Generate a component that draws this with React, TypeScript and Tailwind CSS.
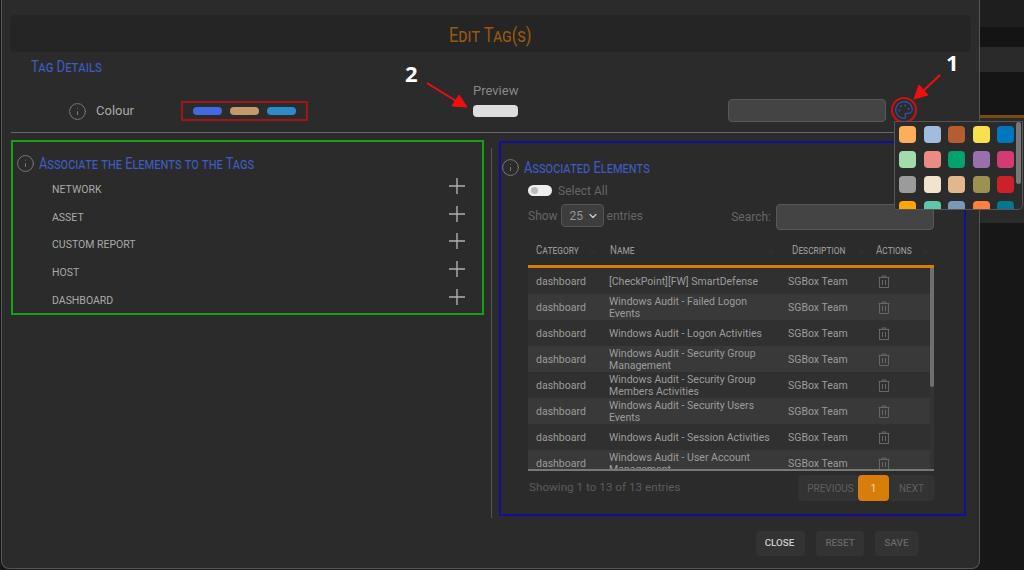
import React from 'react';
import { ChevronDown, Info, Palette } from 'lucide-react';

const elements = ['NETWORK', 'ASSET', 'CUSTOM REPORT', 'HOST', 'DASHBOARD'];

const rows = [
  '[CheckPoint][FW] SmartDefense',
  'Windows Audit - Failed Logon Events',
  'Windows Audit - Logon Activities',
  'Windows Audit - Security Group Management',
  'Windows Audit - Security Group Members Activities',
  'Windows Audit - Security Users Events',
  'Windows Audit - Session Activities',
  'Windows Audit - User Account Management',
];

const swatches = [
  'bg-[#fdae5b]', 'bg-[#a0bddd]', 'bg-[#b65d2f]', 'bg-[#f8e04e]', 'bg-[#0076bf]',
  'bg-[#a2dbac]', 'bg-[#ec8b85]', 'bg-[#00a36c]', 'bg-[#9970ad]', 'bg-[#d43b75]',
  'bg-[#9b9b9b]', 'bg-[#f0e4d0]', 'bg-[#e2b78c]', 'bg-[#9c9150]', 'bg-[#ce2029]',
  'bg-[#ffa600]', 'bg-[#5cc7a9]', 'bg-[#7d97b8]', 'bg-[#ff7f3f]', 'bg-[#00798c]',
];

const columns = [
  { label: 'Category', width: 'w-[73px] pl-2' },
  { label: 'Name', width: 'w-[179px] pl-[9px]' },
  { label: 'Description', width: 'w-[88px] pl-3' },
  { label: 'Actions', width: 'w-[66px] pl-2' },
];

const Plus = () => (
  <svg viewBox="0 0 16 16" className="w-4 h-4 mb-[8px] text-[#b0b0b0]" fill="none" stroke="currentColor" strokeWidth="1.4">
    <path d="M8 0v16M0 8h16" />
  </svg>
);

const Trash = () => (
  <svg viewBox="0 0 12 13" className="ml-[10px] w-3 h-[13px] text-[#666]" fill="none" stroke="currentColor" strokeWidth="1">
    <path d="M.5 2.5h11M4 2.5V1h4v1.5M1.5 2.5v10h9v-10M4.5 5v5M7.5 5v5" />
  </svg>
);

// the app's heading face is a narrow small-caps, Roboto squeezed to the same width
const Heading = ({ children }: { children: React.ReactNode }) => (
  <span className="inline-block origin-left scale-x-[0.8] whitespace-nowrap text-[16px] leading-4 text-[#3f5cc4] [font-variant:small-caps]">{children}</span>
);

export default function App() {
  return (
    <div className="relative w-[1024px] h-[570px] overflow-hidden flex bg-[#171717] font-['Roboto',sans-serif]">
      <div className="ml-[1px] w-[979px] h-[569px] shrink-0 border-x border-b border-[#565656] rounded-b-[8px] bg-[#2b2b2b] px-2 pt-[15px]">
        <div className="h-[37px] pt-[3px] rounded-[5px] bg-[#252525] flex items-center justify-center">
          <span className="inline-block scale-x-[0.82] text-[20px] text-[#99590f] [font-variant:small-caps]">Edit Tag(s)</span>
        </div>

        <div className="mt-[7px] ml-[21px] h-4 leading-4 text-[16px] origin-left scale-x-[0.82] text-[#3f5cc4] [font-variant:small-caps]">Tag Details</div>

        <div className="mt-[7px] h-[41px] flex items-end">
          <div className="h-6 flex items-center ml-[58px]">
            <Info className="w-[19px] h-[19px] text-[#777]" strokeWidth={1.25} />
            <span className="ml-[9px] w-[85px] text-[13px] text-[#aaa]">Colour</span>
          </div>
          <div className="mb-[2px] w-[127px] h-5 border-2 border-[#a01515] flex items-center gap-2 pl-[10px]">
            <span className="w-[29px] h-2 rounded-full bg-[#4169e1]" />
            <span className="w-[29px] h-2 rounded-full bg-[#c49a6c]" />
            <span className="w-[29px] h-2 rounded-full bg-[#2e8bc9]" />
          </div>
          <div className="ml-[165px] w-[45px] mb-[6px] flex flex-col">
            <span className="text-[13px] leading-[17px] text-[#888] whitespace-nowrap">Preview</span>
            <span className="mt-[6px] h-3 rounded-[4px] bg-[#dedede]" />
          </div>
          <div className="ml-[210px] w-[158px] h-[23px] mb-[1px] rounded-[4px] border border-[#585858] bg-[#444]" />
          <div className="ml-[5px] w-[26px] h-[26px] rounded-full border-2 border-[#d01010] flex items-center justify-center">
            <Palette className="w-5 h-5 text-[#3355bb]" strokeWidth={1.4} />
          </div>
        </div>

        <div className="mt-[9px] ml-px h-px bg-[#666]" />

        <div className="flex mt-[7px]">
          <div className="ml-px w-[473px] h-[175px] border-2 border-[#17a017] pl-[3px] pr-[17px] pt-[12px]">
            <div className="flex items-center gap-1">
              <Info className="w-[19px] h-[19px] text-[#777]" strokeWidth={1.25} />
              <Heading>Associate the Elements to the Tags</Heading>
            </div>
            <div className="mt-[3px]">
              {elements.map((name) => (
                <div key={name} className="h-[27.7px] flex items-center justify-between pl-[36px]">
                  <span className="text-[10.5px] text-[#aaa]">{name}</span>
                  <Plus />
                </div>
              ))}
            </div>
          </div>

          <div className="ml-[7px] mt-2 w-px h-[370px] bg-[#555]" />

          <div className="ml-[7px] mt-px w-[467px] h-[375px] border-2 border-[#10109a] pt-[15px]">
            <div className="flex items-center gap-1">
              <Info className="w-[19px] h-[19px] text-[#777]" strokeWidth={1.25} />
              <Heading>Associated Elements</Heading>
            </div>

            <div className="pl-[27px] pr-[30px]">
              <div className="mt-[7px] h-3 flex items-center">
                <span className="w-6 h-[11px] rounded-full bg-[#eee] flex items-center pl-[3px]">
                  <span className="w-[7px] h-[7px] rounded-full bg-[#bbb]" />
                </span>
                <span className="ml-[6px] pt-[2px] text-xs text-[#666]">Select All</span>
              </div>

              <div className="mt-2 h-[26px] flex items-start">
                <div className="h-[23px] flex items-center text-xs text-[#666]">
                  <span>Show</span>
                  <span className="ml-[3px] w-[43px] h-[23px] rounded-[4px] border border-[#555] bg-[#3d3d3d] flex items-center pl-[8px] gap-[4px] text-[#999]">
                    25
                    <ChevronDown className="w-3 h-3 text-[#ccc]" strokeWidth={2.5} />
                  </span>
                  <span className="ml-[3px]">entries</span>
                </div>
                <div className="ml-auto h-[26px] flex items-center text-xs text-[#666]">
                  <span>Search:</span>
                  <span className="ml-[5px] w-[158px] h-[26px] rounded-[4px] border border-[#585858] bg-[#444]" />
                </div>
              </div>

              <div className="mt-2 h-[30px] flex border-b-[3px] border-[#d97d0a]">
                {columns.map((col) => (
                  <div key={col.label} className={`${col.width} pr-[6px] pb-[3px] flex items-center justify-between text-[#999]`}>
                    <span className="inline-block origin-left scale-x-[0.81] text-[12px] [font-variant:small-caps]">{col.label}</span>
                    <span className="text-[6px] text-[#444]">↑↓</span>
                  </div>
                ))}
              </div>

              <div className="flex h-[201px]">
                <div className="w-[402px] overflow-hidden">
                  {rows.map((name, i) => (
                    <div key={name} className={`h-[26px] pt-px flex items-center text-[10.5px] leading-3 text-[#9c9c9c] ${i % 2 ? 'bg-[#393939]' : 'bg-[#303030]'}`}>
                      <span className="w-[73px] pl-2">dashboard</span>
                      <span className="w-[179px] pl-2 pr-[9px]">{name}</span>
                      <span className="w-[88px] pl-2">SGBox Team</span>
                      <Trash />
                    </div>
                  ))}
                </div>
                <div className="w-1 bg-[#333]">
                  <div className="h-[119px] rounded-b-full bg-[#6f6f6f]" />
                </div>
              </div>
              <div className="h-[2px] bg-[#777]" />

              <div className="mt-1 h-[26px] flex items-center justify-between text-[11.7px] text-[#5c5c5c]">
                <span className="pl-px">Showing 1 to 13 of 13 entries</span>
                <div className="flex h-[26px] items-stretch text-[10px] text-[#5f5f5f]">
                  <span className="w-[60px] pl-[5px] rounded-l-[4px] bg-[#333] flex items-center justify-center">PREVIOUS</span>
                  <span className="w-[31px] rounded-[4px] bg-[#d97d0a] text-[#e8dcc8] flex items-center justify-center">1</span>
                  <span className="w-[45px] rounded-r-[4px] bg-[#333] flex items-center justify-center">NEXT</span>
                </div>
              </div>
            </div>
          </div>
        </div>

        <div className="mt-[13px] mr-[53px] flex justify-end gap-[11px] text-[9.8px] font-medium">
          <button className="w-[49px] h-[25px] pr-[2px] rounded-[4px] bg-[#333] text-[#ccc]">CLOSE</button>
          <button className="w-[48px] h-[25px] rounded-[4px] bg-[#333] text-[#666]">RESET</button>
          <button className="w-[43px] h-[25px] rounded-[4px] bg-[#333] text-[#666]">SAVE</button>
        </div>
      </div>

      <div className="flex-1 flex flex-col">
        <div className="h-[27px] bg-[#1e1e1e]" />
        <div className="h-5 bg-[#141414]" />
        <div className="h-[25px] bg-[#2a2a2a]" />
        <div className="h-[43px] bg-[#151515]" />
        <div className="h-[3px] bg-[#7a4a10]" />
        <div className="h-[105px] bg-[#2a2a2a]" />
        <div className="flex-1 bg-[#171717]" />
      </div>

      {/* colour picker popup */}
      <div className="absolute left-[894px] top-[121px] w-[129px] h-[89px] overflow-hidden rounded-br-[5px] border border-[#555] bg-[#2b2b2b]">
        <div className="grid grid-cols-[repeat(5,17px)] gap-x-[7.5px] gap-y-[8px] pl-1 pt-1">
          {swatches.map((c) => (
            <span key={c} className={`w-[17px] h-[17px] rounded-[4px] ${c}`} />
          ))}
        </div>
        <div className="absolute right-[1px] top-0 w-[5px] h-[62px] rounded-full bg-[#777]" />
      </div>

      {/* annotations */}
      <svg className="absolute inset-0 pointer-events-none" width="1024" height="570" viewBox="0 0 1024 570">
        <g fill="#f00f0f" stroke="#f00f0f" strokeWidth="2">
          <path d="M940 75 L922 92" fill="none" />
          <path d="M914 99 L919 85 L928 95 Z" strokeWidth="1" />
          <path d="M427 83 L456 101" fill="none" />
          <path d="M467 107 L452 106 L459 95 Z" strokeWidth="1" />
        </g>
      </svg>
      <span className="absolute left-[946px] top-[49px] text-[22px] leading-[26px] font-bold text-white font-['Open_Sans',sans-serif]">1</span>
      <span className="absolute left-[405px] top-[60px] text-[22px] leading-[26px] font-bold text-white font-['Open_Sans',sans-serif]">2</span>
    </div>
  );
}
